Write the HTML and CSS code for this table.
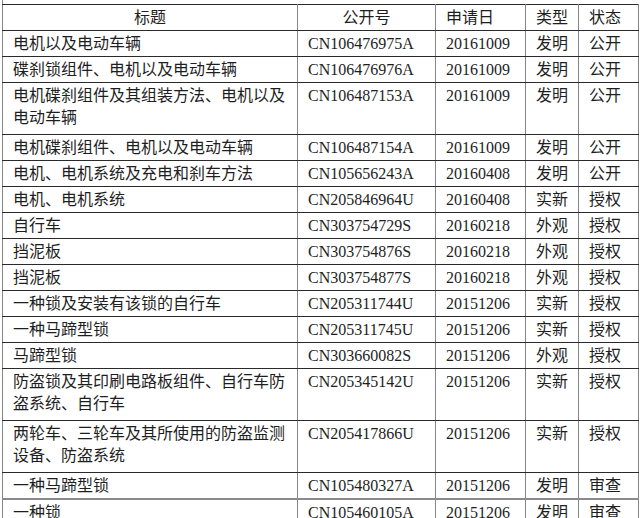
FILE: index.html
```html
<!DOCTYPE html>
<html lang="zh-CN">
<head>
<meta charset="utf-8">
<title>专利列表</title>
<link rel="stylesheet" href="styles.css">
</head>
<body>
<div class="page">
<table class="patents">
  <colgroup>
    <col class="c-title"><col class="c-no"><col class="c-date"><col class="c-type"><col class="c-state">
  </colgroup>
  <thead>
    <tr><th class="center">标题</th><th class="center">公开号</th><th>申请日</th><th>类型</th><th>状态</th></tr>
  </thead>
  <tbody>
    <tr><td>电机以及电动车辆</td><td>CN106476975A</td><td>20161009</td><td>发明</td><td>公开</td></tr>
    <tr><td>碟刹锁组件、电机以及电动车辆</td><td>CN106476976A</td><td>20161009</td><td>发明</td><td>公开</td></tr>
    <tr class="tall"><td>电机碟刹组件及其组装方法、电机以及电动车辆</td><td>CN106487153A</td><td>20161009</td><td>发明</td><td>公开</td></tr>
    <tr><td>电机碟刹组件、电机以及电动车辆</td><td>CN106487154A</td><td>20161009</td><td>发明</td><td>公开</td></tr>
    <tr><td>电机、电机系统及充电和刹车方法</td><td>CN105656243A</td><td>20160408</td><td>发明</td><td>公开</td></tr>
    <tr><td>电机、电机系统</td><td>CN205846964U</td><td>20160408</td><td>实新</td><td>授权</td></tr>
    <tr><td>自行车</td><td>CN303754729S</td><td>20160218</td><td>外观</td><td>授权</td></tr>
    <tr><td>挡泥板</td><td>CN303754876S</td><td>20160218</td><td>外观</td><td>授权</td></tr>
    <tr><td>挡泥板</td><td>CN303754877S</td><td>20160218</td><td>外观</td><td>授权</td></tr>
    <tr><td>一种锁及安装有该锁的自行车</td><td>CN205311744U</td><td>20151206</td><td>实新</td><td>授权</td></tr>
    <tr><td>一种马蹄型锁</td><td>CN205311745U</td><td>20151206</td><td>实新</td><td>授权</td></tr>
    <tr><td>马蹄型锁</td><td>CN303660082S</td><td>20151206</td><td>外观</td><td>授权</td></tr>
    <tr class="tall"><td>防盗锁及其印刷电路板组件、自行车防盗系统、自行车</td><td>CN205345142U</td><td>20151206</td><td>实新</td><td>授权</td></tr>
    <tr class="tall"><td>两轮车、三轮车及其所使用的防盗监测设备、防盗系统</td><td>CN205417866U</td><td>20151206</td><td>实新</td><td>授权</td></tr>
    <tr><td>一种马蹄型锁</td><td>CN105480327A</td><td>20151206</td><td>发明</td><td>审查</td></tr>
    <tr class="break"><td>一种锁</td><td>CN105460105A</td><td>20151206</td><td>发明</td><td>审查</td></tr>
  </tbody>
</table>
</div>
</body>
</html>
```

FILE: styles.css
```css
html, body {
  margin: 0;
  padding: 0;
  background: #ffffff;
}

.page {
  padding: 4px 0 0 2px;
  border-left: 1px solid #8c8c8c;
  margin-left: 2px;
  padding-left: 0;
  width: 636px;
}

.patents {
  border-collapse: collapse;
  table-layout: fixed;
  width: 636px;
  margin-left: -1px;
  font-family: "Liberation Serif", "Noto Sans CJK SC", serif;
  font-size: 16px;
  line-height: 22px;
  color: #1e1e1e;
}

.c-title { width: 295px; }
.c-no { width: 138px; }
.c-date { width: 90px; }
.c-type { width: 53px; }
.c-state { width: 60px; }

.patents th,
.patents td {
  border-top: 1px solid #2a2a2a;
  border-bottom: 1px solid #2a2a2a;
  border-left: 1px solid #858585;
  border-right: 1px solid #858585;
  padding: 2px 9px 0 10px;
  vertical-align: top;
  text-align: left;
  font-weight: normal;
  white-space: normal;
}

.patents th.center {
  text-align: center;
  padding-left: 9px;
}

.patents tr {
  height: 26px;
}

.patents tr.tall {
  height: 52px;
}

.patents tr.break td {
  border-top: 2px solid #8a8a8a;
}
```
